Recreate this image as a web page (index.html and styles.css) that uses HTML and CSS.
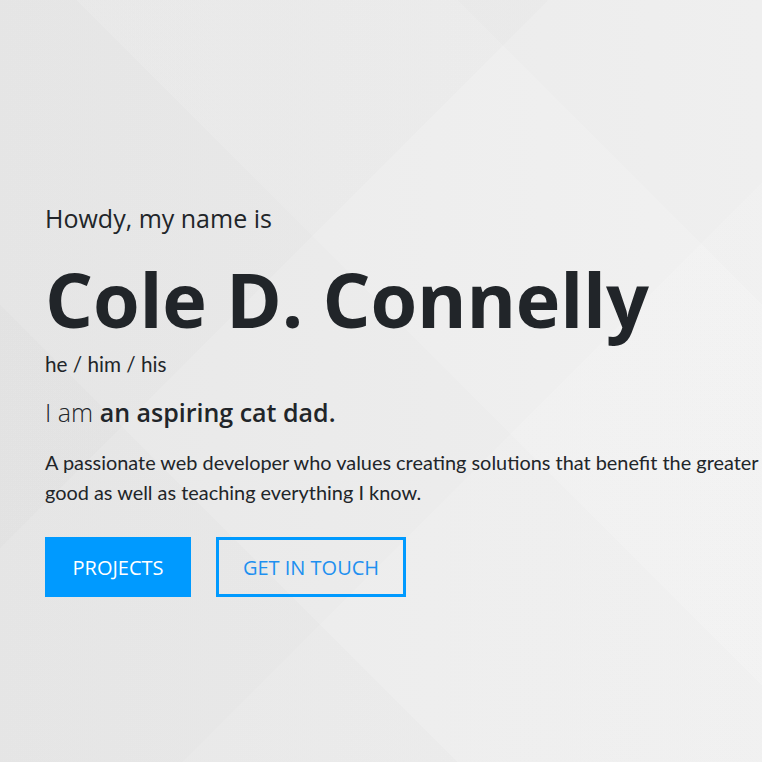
FILE: index.html
```html
<!DOCTYPE html>
<html lang="en">
<head>
<meta charset="utf-8">
<title>Cole D. Connelly</title>
<link rel="stylesheet" href="styles.css">
</head>
<body>
<main class="hero">
  <div class="intro">
    <p class="greeting">Howdy, my name is</p>
    <h1 class="name">Cole D. Connelly</h1>
    <p class="pronouns">he / him / his</p>
    <p class="tagline">I am <strong>an aspiring cat dad.</strong></p>
    <p class="bio">A passionate web developer who values creating solutions that benefit the greater good as well as teaching everything I know.</p>
    <div class="actions">
      <a class="btn btn-solid" href="#projects">Projects</a>
      <a class="btn btn-outline" href="#contact">Get in touch</a>
    </div>
  </div>
</main>
</body>
</html>
```

FILE: styles.css
```css
* { box-sizing: border-box; }
html, body { margin: 0; padding: 0; }
body {
  width: 762px;
  height: 762px;
  overflow: hidden;
  color: #212529;
  font-family: "Open Sans", "Noto Sans", sans-serif;
  background-color: #ececec;
  background-image:
    linear-gradient(135deg, rgba(0,0,0,0.012) 0 36%, transparent 36%),
    linear-gradient(45deg, transparent 0 55%, rgba(255,255,255,0.12) 55% 80%, transparent 80%),
    linear-gradient(135deg, transparent 0 62%, rgba(255,255,255,0.1) 62%),
    linear-gradient(45deg, rgba(0,0,0,0.012) 0 30%, transparent 30%),
    linear-gradient(90deg, #e8e8e8, #efefef);
}
.hero {
  height: 762px;
  padding: 203px 0 0 45px;
}
.intro p { margin: 0; }
.greeting {
  font-size: 25px;
  line-height: 30px;
  font-weight: 400;
}
.name {
  margin: 16px 0 0;
  font-size: 75.5px;
  line-height: 100px;
  font-weight: 700;
  letter-spacing: -0.2px;
}
.intro .pronouns {
  font-family: "Lato", sans-serif;
  font-size: 20.7px;
  line-height: 26px;
  margin-top: 2px;
}
.intro .tagline {
  margin-top: 17px;
  font-size: 25px;
  line-height: 36px;
  font-weight: 300;
}
.tagline strong { font-weight: 600; }
.intro .bio {
  margin-top: 17px;
  font-family: "Lato", sans-serif;
  font-size: 19.9px;
  line-height: 30px;
  width: 745px;
}
.actions {
  display: flex;
  gap: 25px;
  margin-top: 30px;
}
.btn {
  display: flex;
  align-items: center;
  justify-content: center;
  height: 60px;
  font-size: 20px;
  text-transform: uppercase;
  text-decoration: none;
}
.btn-solid {
  width: 146px;
  background: #009aff;
  color: #fff;
}
.btn-outline {
  width: 190px;
  border: 3px solid #009aff;
  color: #1e90f0;
}
```
